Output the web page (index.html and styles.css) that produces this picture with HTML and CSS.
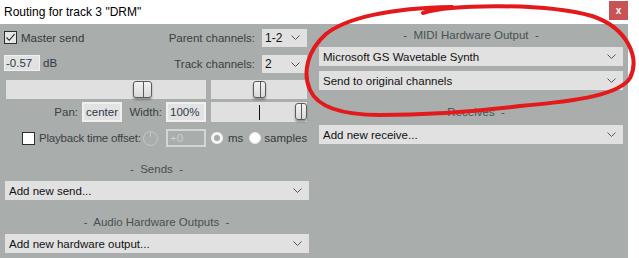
FILE: index.html
```html
<!DOCTYPE html>
<html lang="en">
<head>
    <meta charset="UTF-8">
    <meta name="viewport" content="width=device-width, initial-scale=1.0">
    <title>Routing for track 3</title>
    <link rel="stylesheet" href="styles.css">
</head>

<body>
<div class="window">
  <div class="titlebar">
    <span class="title">Routing for track 3 "DRM"</span>
    <span class="close">x</span>
  </div>

  <div class="panel">
    <!-- левая колонка: громкость, панорама, посылы -->
    <div class="col">
      <div class="row r1">
        <span class="box checked">
          <svg width="11" height="11" viewBox="0 0 11 11"><polyline points="1.5,5.5 4.2,8.3 9.6,2.2" fill="none" stroke="#222" stroke-width="1.1"/></svg>
        </span>
        <span class="text first">Master send</span>
        <span class="label grow">Parent channels:</span>
        <div class="select tiny">
          <span>1-2</span>
          <svg class="chev" width="9" height="5" viewBox="0 0 9 5"><polyline points="0.5,0.5 4.5,4.5 8.5,0.5" fill="none" stroke="#555" stroke-width="1"/></svg>
        </div>
      </div>

      <div class="row r2">
        <div class="field db">-0.57</div>
        <span class="text">dB</span>
        <span class="label grow">Track channels:</span>
        <div class="select tiny">
          <span>2</span>
          <svg class="chev" width="9" height="5" viewBox="0 0 9 5"><polyline points="0.5,0.5 4.5,4.5 8.5,0.5" fill="none" stroke="#555" stroke-width="1"/></svg>
        </div>
      </div>

      <div class="row r3">
        <div class="slider wide"><span class="thumb big" style="left: 127px"></span></div>
        <div class="slider short"><span class="thumb" style="left: 42px"></span></div>
      </div>

      <div class="row r4">
        <span class="label pan">Pan:</span>
        <div class="field small">center</div>
        <span class="label width">Width:</span>
        <div class="field small">100%</div>
        <div class="slider short">
          <span class="mark"></span>
          <span class="thumb" style="left: 84px; width: 12px"></span>
        </div>
      </div>

      <div class="row r5">
        <span class="box"></span>
        <span class="text off">Playback time offset:</span>
        <span class="knob"></span>
        <div class="field small disabled">+0</div>
        <span class="radio on"></span>
        <span class="text ms">ms</span>
        <span class="radio"></span>
        <span class="text samples">samples</span>
      </div>

      <div class="heading">-&nbsp; Sends &nbsp;-</div>
      <div class="select full">
        <span>Add new send...</span>
        <svg class="chev" width="9" height="5" viewBox="0 0 9 5"><polyline points="0.5,0.5 4.5,4.5 8.5,0.5" fill="none" stroke="#555" stroke-width="1"/></svg>
      </div>

      <div class="heading">-&nbsp; Audio Hardware Outputs &nbsp;-</div>
      <div class="select full">
        <span>Add new hardware output...</span>
        <svg class="chev" width="9" height="5" viewBox="0 0 9 5"><polyline points="0.5,0.5 4.5,4.5 8.5,0.5" fill="none" stroke="#555" stroke-width="1"/></svg>
      </div>
    </div>

    <!-- правая колонка: MIDI выход и приёмы -->
    <div class="col right">
      <div class="heading midi">-&nbsp; MIDI Hardware Output &nbsp;-</div>
      <div class="select full">
        <span>Microsoft GS Wavetable Synth</span>
        <svg class="chev" width="9" height="5" viewBox="0 0 9 5"><polyline points="0.5,0.5 4.5,4.5 8.5,0.5" fill="none" stroke="#555" stroke-width="1"/></svg>
      </div>
      <div class="select full next">
        <span>Send to original channels</span>
        <svg class="chev" width="9" height="5" viewBox="0 0 9 5"><polyline points="0.5,0.5 4.5,4.5 8.5,0.5" fill="none" stroke="#555" stroke-width="1"/></svg>
      </div>

      <div class="heading receives">-&nbsp; Receives &nbsp;-</div>
      <div class="select full">
        <span>Add new receive...</span>
        <svg class="chev" width="9" height="5" viewBox="0 0 9 5"><polyline points="0.5,0.5 4.5,4.5 8.5,0.5" fill="none" stroke="#555" stroke-width="1"/></svg>
      </div>
    </div>
  </div>

  <!-- красный обвод поверх окна -->
  <svg class="scribble" width="639" height="258" viewBox="0 0 639 258">
    <path d="M 423 13 C 452 4, 545 3, 592 16 C 628 28, 640 58, 630 78 C 620 94, 580 101, 520 106 C 470 112, 420 115, 380 115 C 345 115, 318 108, 310 90 C 302 72, 308 50, 326 34 C 346 18, 390 8, 452 7"
          fill="none" stroke="#e3191c" stroke-width="4" stroke-linecap="round"/>
  </svg>
</div>
</body>
</html>
```

FILE: styles.css
```css
body {
  margin: 0;
  background: #fff;
  font-family: "Liberation Sans", Arial, sans-serif;
  font-size: 11.5px;
  color: #1a1a1a;
}

.window {
  position: relative;
  width: 639px;
  height: 258px;
  overflow: hidden;
}

.titlebar {
  display: flex;
  align-items: flex-start;
  justify-content: space-between;
  height: 24px;
  width: 628px;
}

.title {
  margin: 5px 0 0 4px;
  font-size: 12px;
  color: #000;
}

.close {
  display: flex;
  align-items: center;
  justify-content: center;
  width: 19px;
  height: 19px;
  margin-top: 1px;
  background: #c75353;
  color: #fff;
  font-weight: bold;
  font-size: 10px;
}

.panel {
  display: grid;
  grid-template-columns: 305px 304px;
  column-gap: 10px;
  width: 628px;
  height: 234px;
  box-sizing: border-box;
  padding: 4px 5px 0 4px;
  background: #a9aeac;
}

.col {
  display: flex;
  flex-direction: column;
}

.row {
  display: flex;
  align-items: center;
}

.r1 { height: 19px; }
.r2 { height: 18px; margin-top: 8px; align-items: flex-start; }
.r3 { height: 19px; margin-top: 7px; }
.r4 { height: 20px; margin-top: 3px; }
.r5 { height: 18px; margin-top: 7px; }

.text {
  color: #34393d;
  white-space: nowrap;
}

.text.first { margin-left: 4px; }
.text.off { width: 100px; margin-left: 4px; color: #3c4144; letter-spacing: -0.2px; }
.text.ms { margin: 0 6px 0 5px; }
.text.samples { margin-left: 3px; }

.label {
  color: #3a3f42;
  white-space: nowrap;
}

.grow {
  flex: 1;
  text-align: right;
  margin-right: 7px;
}

.r2 .label { line-height: 18px; }
.r2 .text { margin-left: 3px; line-height: 16px; }

.box {
  display: flex;
  align-items: center;
  justify-content: center;
  width: 11px;
  height: 11px;
  border: 1px solid #2e2e2e;
  background: #fff;
}

.box.checked { background: #e6e6e6; }

.r5 .box { margin-left: 18px; }

.select {
  display: flex;
  align-items: center;
  justify-content: space-between;
  box-sizing: border-box;
  height: 19px;
  background: #e1e1e1;
  color: #111;
  padding: 0 7px 0 4px;
  white-space: nowrap;
}

.select.tiny {
  width: 45px;
  height: 18px;
  margin-right: 2px;
  padding-left: 3px;
  font-size: 12px;
}

.select.full {
  width: 304px;
}

.col .select.full { margin-left: 1px; }
.col.right .select.full { margin-left: 0; }

.chev { flex: none; }

.field {
  box-sizing: border-box;
  height: 20px;
  border: 2px solid #f0f0f0;
  background: #e2e2e2;
  color: #2a3a4a;
  line-height: 16px;
  padding-left: 2px;
  white-space: nowrap;
}

.field.db {
  width: 36px;
  height: 16px;
  border-width: 1px;
  line-height: 14px;
  padding-left: 1px;
}

.field.small { width: 40px; flex: none; }

.field.disabled {
  height: 18px;
  line-height: 14px;
  background: #a9aeac;
  border-color: #d4d6d5;
  color: #cdd0cf;
}

.label.pan {
  width: 74px;
  text-align: right;
  margin-right: 4px;
}

.label.width {
  width: 40px;
  text-align: right;
  margin-right: 4px;
}

.slider {
  position: relative;
  height: 19px;
  background: #e0e0e0;
}

.slider.wide { width: 200px; margin-left: 2px; }
.slider.short { width: 96px; margin-left: 5px; }
.r4 .slider { height: 20px; }

.thumb {
  position: absolute;
  top: 1px;
  width: 13px;
  height: 17px;
  box-sizing: border-box;
  border: 1px solid #5a5a5a;
  border-radius: 3px;
  background: linear-gradient(#f2f2f2, #dadada);
  box-shadow: 0 2px 2px rgba(60, 60, 60, 0.45);
}

.thumb::after {
  content: "";
  position: absolute;
  left: 50%;
  top: 0;
  bottom: 0;
  border-left: 1px solid #5a5a5a;
}

.thumb.big { width: 19px; }

.mark {
  position: absolute;
  left: 48px;
  top: 3px;
  height: 15px;
  border-left: 1px solid #111;
}

.knob {
  flex: none;
  box-sizing: border-box;
  width: 15px;
  height: 15px;
  margin: 0 8px 0 4px;
  border: 1px solid #c4c7c6;
  border-radius: 50%;
  position: relative;
}

.knob::after {
  content: "";
  position: absolute;
  left: 6px;
  top: 0;
  height: 5px;
  border-left: 1px solid #c4c7c6;
}

.r5 .field { margin-right: 5px; }

.radio {
  flex: none;
  box-sizing: border-box;
  width: 12px;
  height: 12px;
  border-radius: 50%;
  background: #fff;
  border: 1px solid #e8e8e8;
}

.radio.on {
  border: 3px solid #f4f4f4;
  background: #a7a9a8;
}

.heading {
  height: 16px;
  line-height: 16px;
  text-align: center;
  color: #4a4f52;
  margin: 14px 0 4px;
}

.heading.midi { margin: -1px 0 4px; }
.heading.receives { margin: 14px 0 5px; }

.select.next { margin-top: 5px; }

.scribble {
  position: absolute;
  left: 0;
  top: 0;
  pointer-events: none;
}
```
